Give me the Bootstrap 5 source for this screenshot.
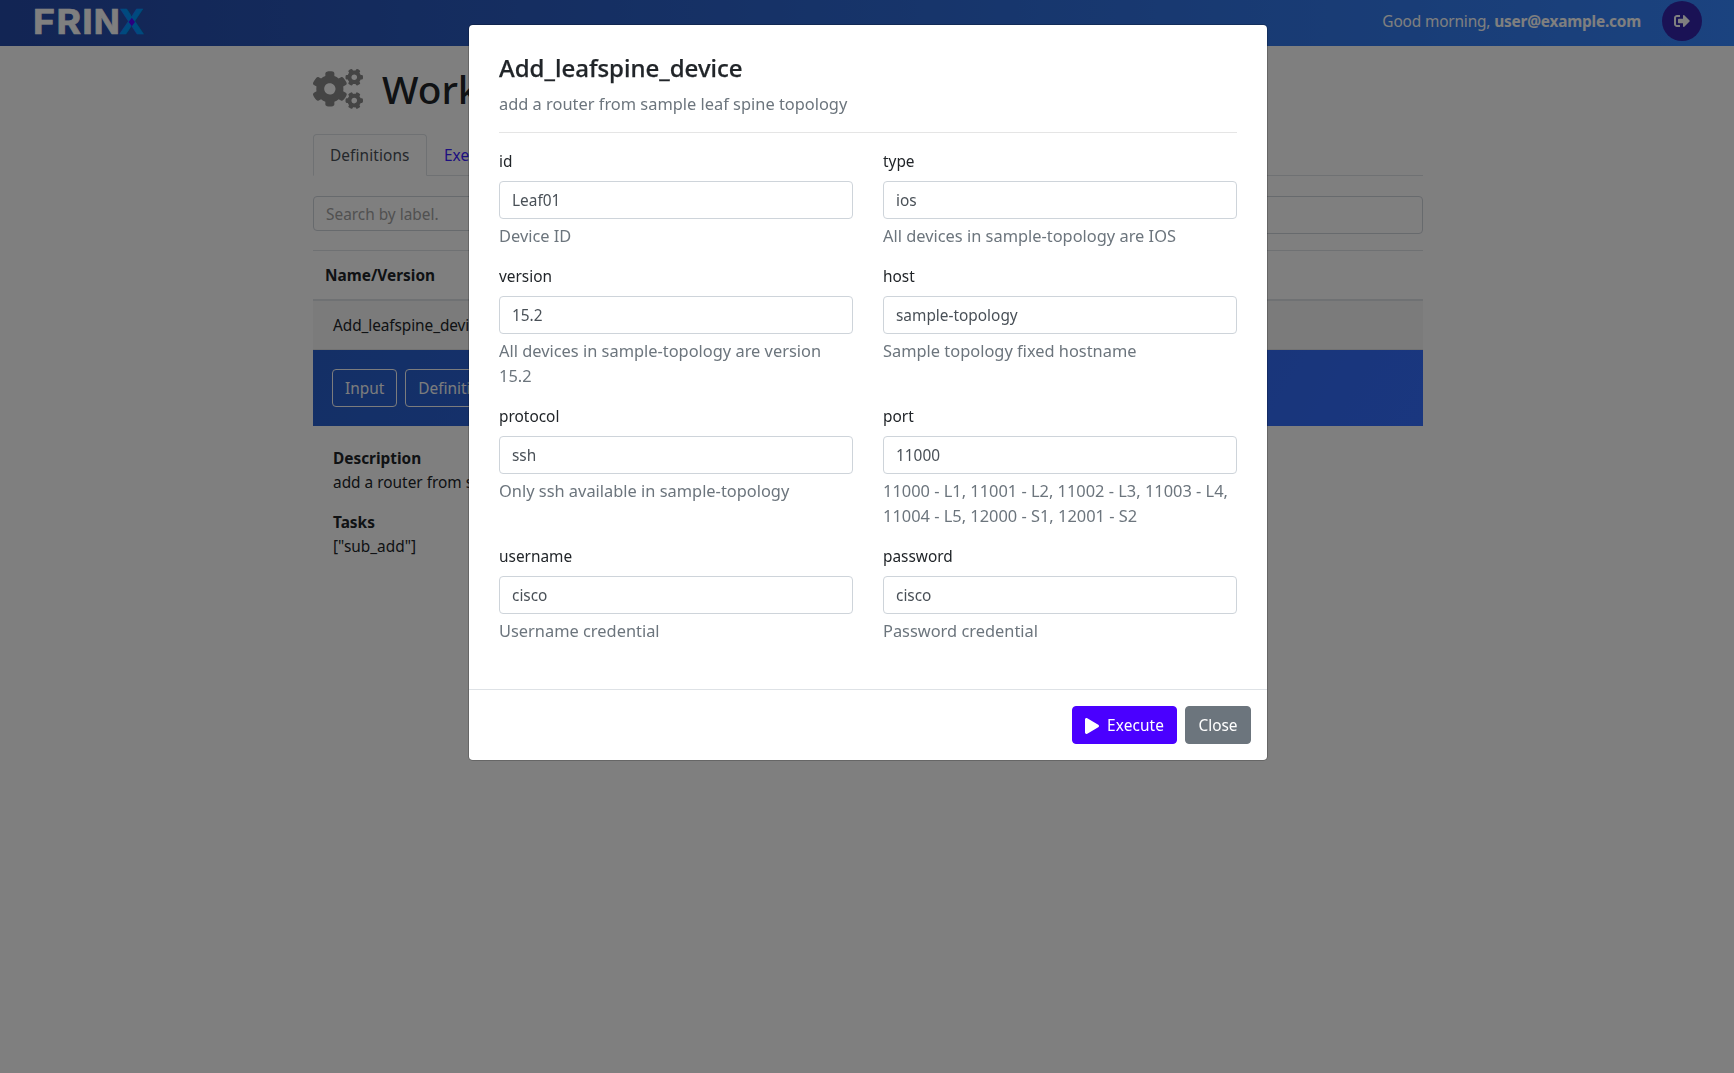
<!DOCTYPE html>
<html lang="en">
<head>
<meta charset="utf-8">
<meta name="viewport" content="width=device-width, initial-scale=1">
<title>FRINX Workflows</title>
<link rel="stylesheet" href="https://cdn.jsdelivr.net/npm/bootstrap@5.3.0/dist/css/bootstrap.min.css">
<style>
  :root { --bs-body-font-family: "Noto Sans", sans-serif; --bs-body-font-size: 15.4px; --shell: 1736px; }
  html, body { height: 100%; overflow: hidden; }
  body { font-family: "Noto Sans", sans-serif; font-size: 15.4px; line-height: 24px; color: #212529; }
  .shell { width: var(--shell); }
  .topbar { height: 46px; padding: 0 34px 4px 30px; background: linear-gradient(to right, #254aa8, #3686ff); color: #fff; }
  .topbar strong { letter-spacing: -.2px; }
  .greeting { letter-spacing: -.15px; margin-right: 21px; padding-top: 1px; }
  .logout { width: 40px; height: 40px; border-radius: 50%; background: #3425aa; border: 0; padding: 0; color: #fff; }
  .page { width: 1110px; margin: 0 auto; }
  .page-title { height: 88px; padding-top: 17px; }
  .page-title h1 { font-size: 38.8px; line-height: 48px; font-weight: 500; margin: 2px 0 0 19px; }
  .nav-tabs { --bs-nav-tabs-border-radius: 4px; }
  .nav-tabs .nav-link { padding: 9px 16px 7px; height: 42px; border-width: 1px; color: #3a20ff; }
  .nav-tabs .nav-link.active { color: #495057; width: 114px; letter-spacing: .1px; }
  .filters { padding: 20px 0 16px; gap: 30px; }
  .filters .form-control { border-radius: 4px; border-color: #ced4da; padding: 7px 12px 5px; height: 38px; font-size: 15.4px; }
  .filters .tags { height: 35px; }
  .filters ::placeholder { color: #a2a2a2; }
  .def-head { border-top: 1px solid #dee2e6; border-bottom: 2px solid #dee2e6; padding: 13px 12px 11px; height: 51px; }
  .def-row { background: #f7f7f7; border-bottom: 1px solid #e4e4e4; padding: 13px 20px 11px; height: 49px; letter-spacing: -.08px; }
  .def-actions { height: 76px; padding: 19px; background: linear-gradient(120deg, #285fcc, #346eff); }
  .btn { font-size: 15.4px; line-height: 24px; border-radius: 4px; padding: 6px 12px 4px; height: 38px; }
  .def-detail { padding: 21px 20px; }
  .backdrop-wide { width: var(--shell); --bs-backdrop-opacity: .5; }
  .modal { width: var(--shell); --bs-modal-width: 800px; --bs-modal-border-radius: 4.8px; overflow: hidden; }
  .modal-dialog { margin: 24px auto; }
  .modal-content { border-color: rgba(0,0,0,.2); background-clip: padding-box; color: #212529; }
  .modal-body { padding: 28px 30px 30px; }
  .modal-body h2 { font-size: 24px; line-height: 29px; font-weight: 500; margin: 0 0 9px; -webkit-text-stroke: .25px; }
  .hint { font-size: 16.4px; line-height: 25px; color: #6c757d; }
  .modal-body hr { margin: 16px 0; border-top: 1px solid #000; opacity: .1; }
  .fields { --bs-gutter-x: 30px; }
  .fields label { display: block; padding-top: 1px; margin-bottom: 7px; }
  .fields .form-control { height: 38px; border-color: #ced4da; border-radius: 4px; color: #495057; padding: 6px 12px; font-size: 15.4px; }
  .fields .hint { margin-top: 4px; }
  .fields > div { margin-bottom: 16px; }
  .modal-footer { padding: 16px; border-top: 1px solid #dee2e6; gap: 8px; }
  .modal-footer > * { margin: 0; }
  .modal-footer .btn { padding-bottom: 5px; }
  .btn-execute { background: #4a00ff; color: #fff; border: 1px solid #4a00ff; width: 105px; letter-spacing: .1px; }
  .btn-close-dialog { background: #6c757d; color: #fff; border: 1px solid #6c757d; width: 66px; }
</style>
<script src="https://cdn.jsdelivr.net/npm/bootstrap@5.3.0/dist/js/bootstrap.bundle.min.js"></script>
</head>
<body>
<div class="shell">
  <header class="topbar d-flex align-items-center justify-content-between">
    <svg width="120" height="42" viewBox="-5 -8 120 42" font-family="Inter, sans-serif" font-weight="700" font-size="33.8" fill="#fff" stroke="#fff" stroke-width=".7" aria-label="FRINX">
      <text x="-2" y="26.200" textLength="22" lengthAdjust="spacingAndGlyphs">F</text>
      <text x="21.500" y="26.200" textLength="24.500" lengthAdjust="spacingAndGlyphs">R</text>
      <text x="47.200" y="26.200" textLength="10.500" lengthAdjust="spacingAndGlyphs">I</text>
      <text x="58.700" y="26.200" textLength="26" lengthAdjust="spacingAndGlyphs">N</text>
      <text x="84.300" y="26.200" textLength="25" lengthAdjust="spacingAndGlyphs" fill="#0095ff" stroke="#0095ff">X</text>
      <path d="M96.800 9.700l3.200 4.300-3.200 4.300-3.200-4.300z" fill="#5400ff" stroke="none"/>
    </svg>
    <div class="d-flex align-items-center">
      <span class="greeting">Good morning, <strong>user@example.com</strong></span>
      <button class="logout d-flex align-items-center justify-content-center" aria-label="Log out">
        <svg width="16" height="16" viewBox="0 0 512 512" fill="currentColor"><path d="M497 273L329 441c-15 15-41 4.500-41-17v-96H152c-13.300 0-24-10.700-24-24v-96c0-13.300 10.700-24 24-24h136V88c0-21.400 25.900-32 41-17l168 168c9.300 9.400 9.300 24.600 0 34zM192 436v-40c0-6.600-5.400-12-12-12H96c-17.700 0-32-14.300-32-32V160c0-17.700 14.300-32 32-32h84c6.600 0 12-5.400 12-12V76c0-6.600-5.400-12-12-12H96c-53 0-96 43-96 96v192c0 53 43 96 96 96h84c6.600 0 12-5.400 12-12z"/></svg>
      </button>
    </div>
  </header>

  <main class="page">
    <div class="page-title d-flex align-items-start">
      <svg class="mt-1" width="50" height="44" viewBox="0 0 640 512" fill="#888">
        <path id="cog" d="M512.1 191l-8.200 14.300c-3 5.300-9.400 7.500-15.100 5.400-11.800-4.400-22.600-10.700-32.100-18.600-4.600-3.800-5.800-10.500-2.800-15.700l8.200-14.300c-6.900-8-12.300-17.300-15.900-27.400h-16.500c-6 0-11.200-4.300-12.200-10.300-2-12-2.100-24.600 0-37.100 1-6 6.200-10.400 12.200-10.400h16.500c3.600-10.100 9-19.400 15.900-27.400l-8.200-14.300c-3-5.200-1.900-11.900 2.800-15.700 9.500-7.900 20.400-14.200 32.100-18.600 5.700-2.100 12.100.1 15.100 5.400l8.200 14.300c10.500-1.900 21.200-1.900 31.700 0L552 6.300c3-5.300 9.400-7.500 15.100-5.400 11.800 4.400 22.600 10.700 32.100 18.600 4.600 3.800 5.800 10.500 2.800 15.700l-8.200 14.300c6.900 8 12.300 17.300 15.900 27.400h16.500c6 0 11.200 4.300 12.200 10.300 2 12 2.100 24.600 0 37.100-1 6-6.200 10.400-12.200 10.400h-16.500c-3.600 10.100-9 19.400-15.900 27.400l8.200 14.300c3 5.200 1.900 11.900-2.800 15.700-9.500 7.900-20.400 14.200-32.100 18.600-5.700 2.100-12.100-.1-15.100-5.400l-8.200-14.300c-10.400 1.900-21.200 1.900-31.700 0zm-10.500-58.800c38.500 29.600 82.400-14.300 52.800-52.800-38.500-29.700-82.400 14.300-52.800 52.800z"/>
        <use href="#cog" y="298.9"/>
        <path d="M386.300 286.100l33.700 16.800c10.100 5.800 14.500 18.100 10.500 29.100-8.900 24.200-26.400 46.400-42.600 65.800-7.400 8.900-20.200 11.100-30.300 5.300l-29.100-16.800c-16 13.700-34.600 24.600-54.900 31.700v33.600c0 11.600-8.300 21.600-19.700 23.600-24.600 4.200-50.400 4.400-75.900 0-11.500-2-20-11.900-20-23.600V418c-20.300-7.200-38.900-18-54.900-31.700L74 403c-10 5.800-22.900 3.600-30.300-5.300-16.200-19.400-33.300-41.600-42.200-65.700-4-10.900.4-23.200 10.500-29.100l33.300-16.800c-3.900-20.900-3.900-42.400 0-63.400L12 205.800c-10.100-5.800-14.600-18.100-10.500-29 8.900-24.200 26-46.400 42.200-65.800 7.400-8.900 20.200-11.100 30.300-5.300l29.100 16.800c16-13.700 34.600-24.600 54.900-31.700V57.100c0-11.500 8.200-21.500 19.600-23.500 24.600-4.200 50.500-4.400 76-.1 11.500 2 20 11.900 20 23.600v33.600c20.300 7.200 38.900 18 54.900 31.700l29.100-16.800c10-5.800 22.900-3.600 30.300 5.300 16.200 19.400 33.200 41.600 42.100 65.800 4 10.900.1 23.200-10 29.100l-33.700 16.800c3.900 21 3.900 42.500 0 63.500zm-117.600 21.100c59.200-77-28.700-164.900-105.700-105.700-59.200 77 28.700 164.900 105.700 105.700z"/>
      </svg>
      <h1>Workflows</h1>
    </div>

    <ul class="nav nav-tabs">
      <li class="nav-item"><a class="nav-link active" href="#">Definitions</a></li>
      <li class="nav-item"><a class="nav-link" href="#">Executed</a></li>
    </ul>

    <div class="filters d-flex align-items-start">
      <input class="form-control tags flex-fill w-50" placeholder="Search by label.">
      <input class="form-control flex-fill w-50" aria-label="Search by keyword">
    </div>

    <div class="def-head fw-bold">Name/Version</div>
    <div class="def-row">Add_leafspine_device / 1</div>
    <div class="def-actions d-flex gap-2">
      <button class="btn btn-outline-light">Input</button>
      <button class="btn btn-outline-light">Definition</button>
    </div>
    <div class="def-detail">
      <div><b>Description</b><br>add a router from sample leaf spine topology</div>
      <div class="mt-3"><b>Tasks</b><br>["sub_add"]</div>
    </div>
  </main>
</div>

<div class="modal-backdrop show backdrop-wide"></div>
<div class="modal d-block" tabindex="-1" role="dialog">
  <div class="modal-dialog">
    <div class="modal-content">
      <div class="modal-body">
        <h2>Add_leafspine_device</h2>
        <div class="hint">add a router from sample leaf spine topology</div>
        <hr>
        <form class="row fields">
          <div class="col-6"><label for="f-id">id</label><input id="f-id" class="form-control" value="Leaf01"><div class="hint">Device ID</div></div>
          <div class="col-6"><label for="f-type">type</label><input id="f-type" class="form-control" value="ios"><div class="hint">All devices in sample-topology are IOS</div></div>
          <div class="col-6"><label for="f-version">version</label><input id="f-version" class="form-control" value="15.2"><div class="hint">All devices in sample-topology are version 15.2</div></div>
          <div class="col-6"><label for="f-host">host</label><input id="f-host" class="form-control" value="sample-topology"><div class="hint">Sample topology fixed hostname</div></div>
          <div class="col-6"><label for="f-protocol">protocol</label><input id="f-protocol" class="form-control" value="ssh"><div class="hint">Only ssh available in sample-topology</div></div>
          <div class="col-6"><label for="f-port">port</label><input id="f-port" class="form-control" value="11000"><div class="hint">11000 - L1, 11001 - L2, 11002 - L3, 11003 - L4, 11004 - L5, 12000 - S1, 12001 - S2</div></div>
          <div class="col-6"><label for="f-user">username</label><input id="f-user" class="form-control" value="cisco"><div class="hint">Username credential</div></div>
          <div class="col-6"><label for="f-pass">password</label><input id="f-pass" class="form-control" value="cisco"><div class="hint">Password credential</div></div>
        </form>
      </div>
      <div class="modal-footer">
        <button class="btn btn-execute d-flex align-items-center justify-content-between"><svg width="14" height="16" viewBox="0 0 448 512" fill="currentColor"><path d="M424.400 214.700L72.400 6.600C43.800-10.300 0 6.100 0 47.900V464c0 37.500 40.700 60.100 72.400 41.300l352-208c31.400-18.500 31.500-64.100 0-82.600z"/></svg>Execute</button>
        <button class="btn btn-close-dialog">Close</button>
      </div>
    </div>
  </div>
</div>
</body>
</html>
